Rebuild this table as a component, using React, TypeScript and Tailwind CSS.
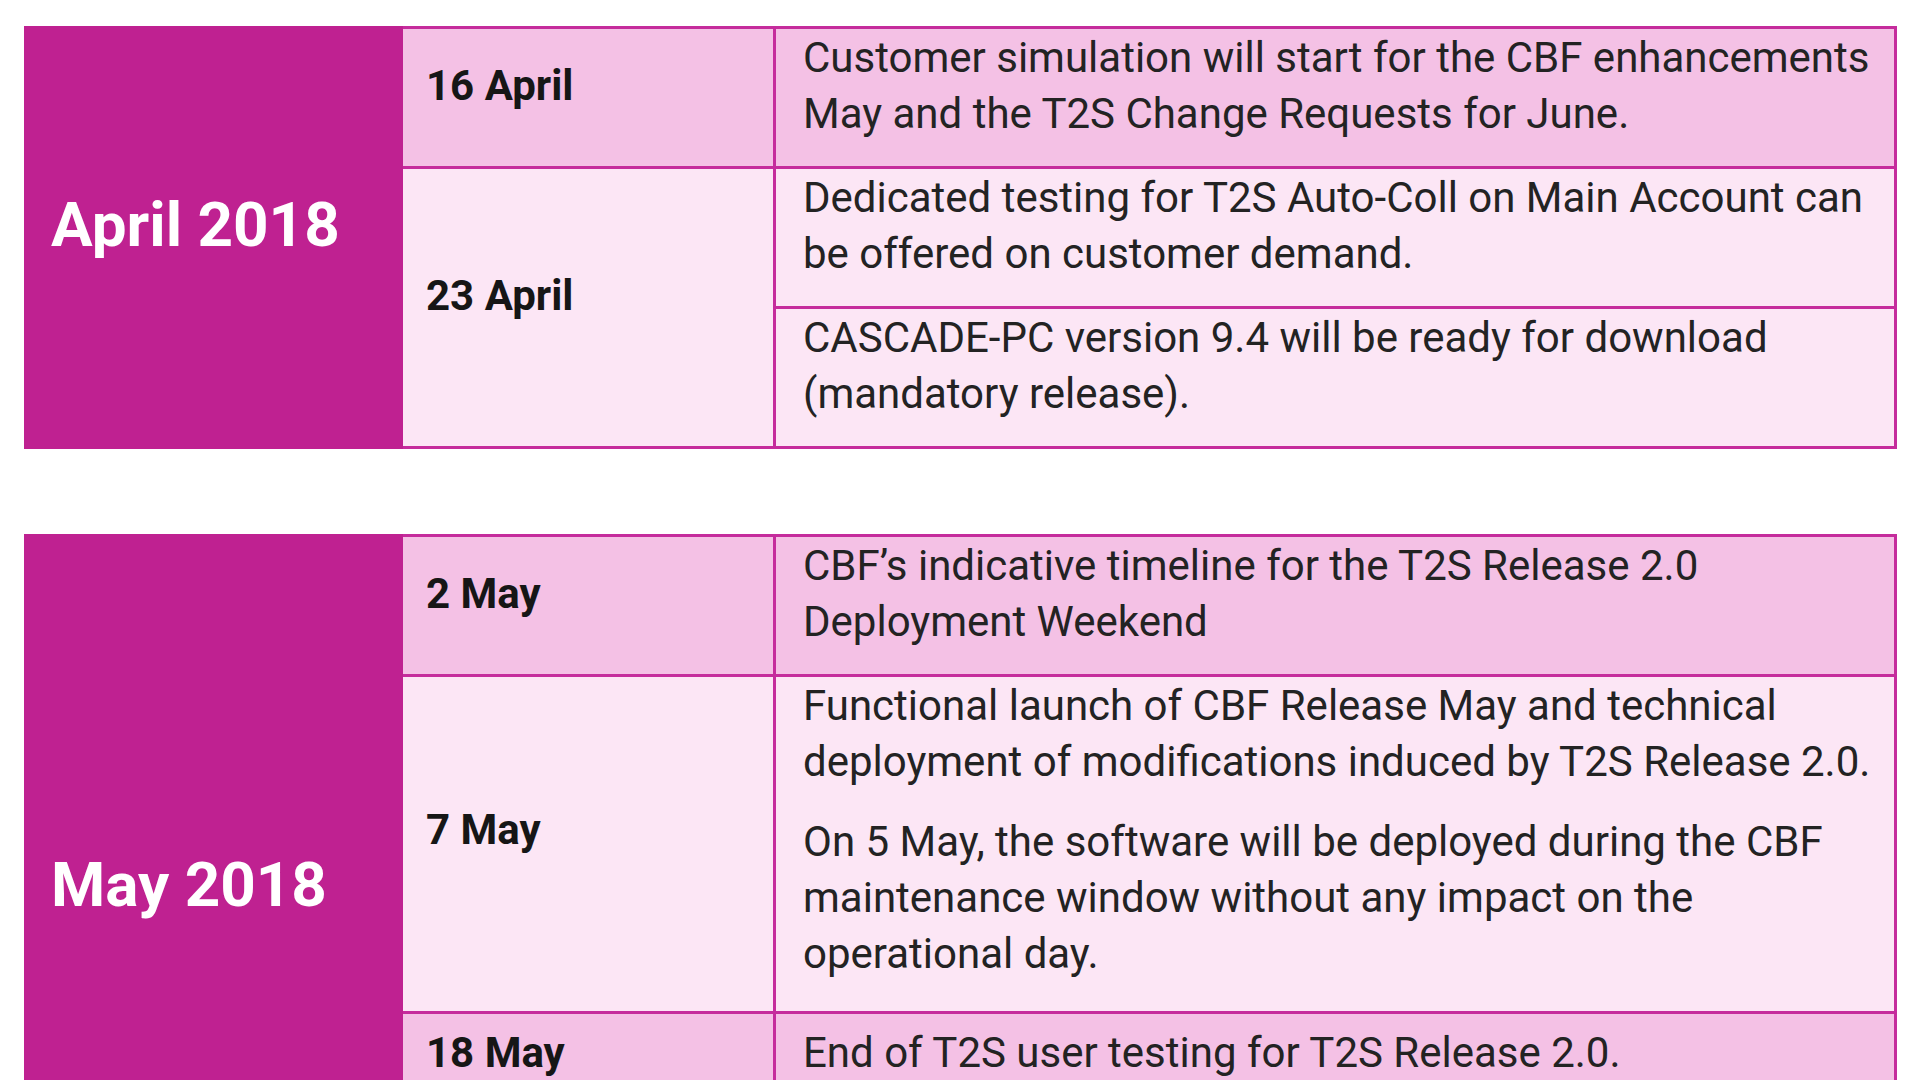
type Entry = {
  date: string
  tone: "dark" | "light"
  span?: number
  // each entry is a paragraph, each paragraph a list of lines
  text?: string[][]
  pad?: string
}

type Block = {
  month: string
  monthPad?: string
  rows: Entry[]
}

const blocks: Block[] = [
  {
    month: "April 2018",
    rows: [
      {
        date: "16 April",
        tone: "dark",
        text: [
          [
            "Customer simulation will start for the CBF enhancements",
            "May and the T2S Change Requests for June.",
          ],
        ],
      },
      {
        date: "23 April",
        tone: "light",
        span: 2,
        text: [
          [
            "Dedicated testing for T2S Auto-Coll on Main Account can",
            "be offered on customer demand.",
          ],
        ],
      },
      {
        date: "",
        tone: "light",
        text: [
          [
            "CASCADE-PC version 9.4 will be ready for download",
            "(mandatory release).",
          ],
        ],
      },
    ],
  },
  {
    month: "May 2018",
    monthPad: "pt-[144px]",
    rows: [
      {
        date: "2 May",
        tone: "dark",
        text: [
          [
            "CBF\u2019s indicative timeline for the T2S Release 2.0",
            "Deployment Weekend",
          ],
        ],
      },
      {
        date: "7 May",
        tone: "light",
        pad: "pb-[5px]",
        text: [
          [
            "Functional launch of CBF Release May and technical",
            "deployment of modifications induced by T2S Release 2.0.",
          ],
          [
            "On 5 May, the software will be deployed during the CBF",
            "maintenance window without any impact on the",
            "operational day.",
          ],
        ],
      },
      {
        date: "18 May",
        tone: "dark",
        pad: "pt-[11px] pb-[9px]",
        text: [["End of T2S user testing for T2S Release 2.0."]],
      },
    ],
  },
]

const cell = "border-[3px] border-[#c52c9c] align-middle pr-2 pt-[1px] pb-0"

function Paragraphs({ text }: { text: string[][] }) {
  return (
    <>
      {text.map((para, i) => (
        <p key={i} className="mb-[24px] whitespace-nowrap">
          {para.map((line, j) => (
            <span key={j}>
              {line}
              {j < para.length - 1 && <br />}
            </span>
          ))}
        </p>
      ))}
    </>
  )
}

function MonthTable({ block, first }: { block: Block; first: boolean }) {
  return (
    <table
      className={`ml-[24px] w-[1873px] table-fixed border-collapse ${
        first ? "mt-[26px]" : "mt-[85px]"
      }`}
    >
      <colgroup>
        <col className="w-[376px]" />
        <col className="w-[373px]" />
        <col />
      </colgroup>
      <tbody>
        {block.rows.map((row, i) => (
          <tr
            key={i}
            className={row.tone === "dark" ? "bg-[#f4c1e5]" : "bg-[#fce6f5]"}
          >
            {i === 0 && (
              <td
                rowSpan={block.rows.length}
                className={`border-[3px] border-[#bf2191] bg-[#bf2191] align-middle pl-[24px] ${
                  block.monthPad ?? ""
                }`}
              >
                <p className="mb-[26px] text-[62px] leading-[72px] font-bold text-white">
                  {block.month}
                </p>
              </td>
            )}
            {row.date !== "" && (
              <td
                rowSpan={row.span ?? 1}
                className={`${cell} pl-[23px] ${row.pad ?? ""}`}
              >
                <p className="mb-[24px] font-bold text-[#161616]">{row.date}</p>
              </td>
            )}
            <td className={`${cell} pl-[27px] ${row.pad ?? ""}`}>
              <Paragraphs text={row.text ?? []} />
            </td>
          </tr>
        ))}
      </tbody>
    </table>
  )
}

export default function App() {
  return (
    <div className="min-h-screen bg-white font-[Roboto,sans-serif] text-[42px] leading-[56px] text-[#232323]">
      {blocks.map((block, i) => (
        <MonthTable key={block.month} block={block} first={i === 0} />
      ))}
    </div>
  )
}
